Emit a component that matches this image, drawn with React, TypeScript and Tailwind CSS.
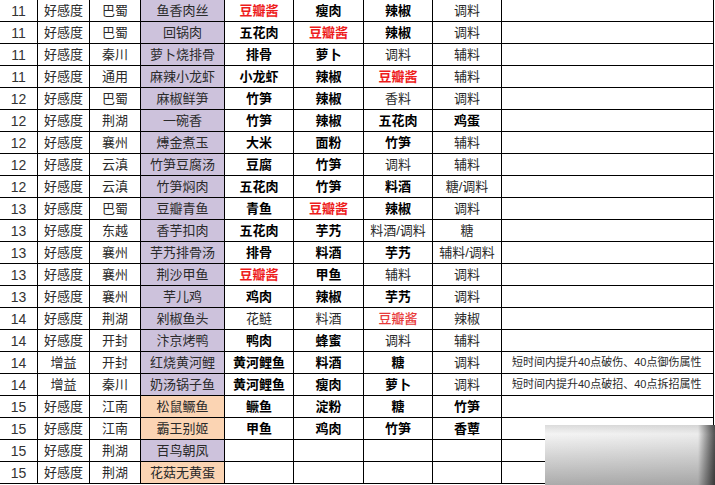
type Cell = { t: string; s?: "b" | "r" | "rn" | "n" };

type Row = {
  lv: string;
  kind: string;
  region: string;
  dish: string;
  bg: "purple" | "orange";
  items: Cell[];
  note?: string;
};

const b = (t: string): Cell => ({ t, s: "b" });
const r = (t: string): Cell => ({ t, s: "r" });
const n = (t: string): Cell => ({ t, s: "n" });

const rows: Row[] = [
  { lv: "11", kind: "好感度", region: "巴蜀", dish: "鱼香肉丝", bg: "purple", items: [r("豆瓣酱"), b("瘦肉"), b("辣椒"), n("调料")] },
  { lv: "11", kind: "好感度", region: "巴蜀", dish: "回锅肉", bg: "purple", items: [b("五花肉"), r("豆瓣酱"), b("辣椒"), n("调料")] },
  { lv: "11", kind: "好感度", region: "秦川", dish: "萝卜烧排骨", bg: "purple", items: [b("排骨"), b("萝卜"), n("调料"), n("辅料")] },
  { lv: "11", kind: "好感度", region: "通用", dish: "麻辣小龙虾", bg: "purple", items: [b("小龙虾"), b("辣椒"), r("豆瓣酱"), n("辅料")] },
  { lv: "12", kind: "好感度", region: "巴蜀", dish: "麻椒鲜笋", bg: "purple", items: [b("竹笋"), b("辣椒"), n("香料"), n("调料")] },
  { lv: "12", kind: "好感度", region: "荆湖", dish: "一碗香", bg: "purple", items: [b("竹笋"), b("辣椒"), b("五花肉"), b("鸡蛋")] },
  { lv: "12", kind: "好感度", region: "襄州", dish: "煿金煮玉", bg: "purple", items: [b("大米"), b("面粉"), b("竹笋"), n("辅料")] },
  { lv: "12", kind: "好感度", region: "云滇", dish: "竹笋豆腐汤", bg: "purple", items: [b("豆腐"), b("竹笋"), n("调料"), n("辅料")] },
  { lv: "12", kind: "好感度", region: "云滇", dish: "竹笋焖肉", bg: "purple", items: [b("五花肉"), b("竹笋"), b("料酒"), n("糖/调料")] },
  { lv: "13", kind: "好感度", region: "巴蜀", dish: "豆瓣青鱼", bg: "purple", items: [b("青鱼"), r("豆瓣酱"), b("辣椒"), n("调料")] },
  { lv: "13", kind: "好感度", region: "东越", dish: "香芋扣肉", bg: "purple", items: [b("五花肉"), b("芋艿"), n("料酒/调料"), n("糖")] },
  { lv: "13", kind: "好感度", region: "襄州", dish: "芋艿排骨汤", bg: "purple", items: [b("排骨"), b("料酒"), b("芋艿"), n("辅料/调料")] },
  { lv: "13", kind: "好感度", region: "襄州", dish: "荆沙甲鱼", bg: "purple", items: [r("豆瓣酱"), b("甲鱼"), n("辅料"), n("调料")] },
  { lv: "13", kind: "好感度", region: "襄州", dish: "芋儿鸡", bg: "purple", items: [b("鸡肉"), b("辣椒"), b("芋艿"), n("调料")] },
  { lv: "14", kind: "好感度", region: "荆湖", dish: "剁椒鱼头", bg: "purple", items: [n("花鲢"), n("料酒"), { t: "豆瓣酱", s: "rn" }, n("辣椒")] },
  { lv: "14", kind: "好感度", region: "开封", dish: "汴京烤鸭", bg: "purple", items: [b("鸭肉"), b("蜂蜜"), n("调料"), n("辅料")] },
  { lv: "14", kind: "增益", region: "开封", dish: "红烧黄河鲤", bg: "purple", items: [b("黄河鲤鱼"), b("料酒"), b("糖"), n("调料")], note: "短时间内提升40点破伤、40点御伤属性" },
  { lv: "14", kind: "增益", region: "秦川", dish: "奶汤锅子鱼", bg: "purple", items: [b("黄河鲤鱼"), b("瘦肉"), b("萝卜"), n("调料")], note: "短时间内提升40点破招、40点拆招属性" },
  { lv: "15", kind: "好感度", region: "江南", dish: "松鼠鳜鱼", bg: "orange", items: [b("鳜鱼"), b("淀粉"), b("糖"), b("竹笋")] },
  { lv: "15", kind: "好感度", region: "江南", dish: "霸王别姬", bg: "orange", items: [b("甲鱼"), b("鸡肉"), b("竹笋"), b("香蕈")] },
  { lv: "15", kind: "好感度", region: "荆湖", dish: "百鸟朝凤", bg: "purple", items: [n(""), n(""), n(""), n("")] },
  { lv: "15", kind: "好感度", region: "荆湖", dish: "花菇无黄蛋", bg: "orange", items: [n(""), n(""), n(""), n("")] },
];

const cell = "h-[22px] flex items-center justify-center border-r border-b border-black whitespace-nowrap overflow-hidden";

function itemClass(s?: Cell["s"]) {
  if (s === "r") return "text-[#ee1c1c] font-bold";
  if (s === "rn") return "text-[#e83a3a] font-medium";
  if (s === "b") return "text-black font-bold";
  return "text-[#2a2a2a]";
}

export default function App() {
  return (
    <div className="relative w-[715px] h-[485px] bg-white overflow-hidden font-['Liberation_Sans','Noto_Sans_CJK_SC',sans-serif] text-[13px] leading-none">
      <div className="grid grid-cols-[38px_52px_51px_84px_69px_70px_69px_69px_212px]">
        {rows.map((row, i) => (
          <div key={i} className="contents">
            <div className={`${cell} text-[14px] text-[#333]`}>{row.lv}</div>
            <div className={`${cell} text-[#2a2a2a]`}>{row.kind}</div>
            <div className={`${cell} text-[#2a2a2a]`}>{row.region}</div>
            <div
              className={`${cell} text-[#2a2a2a] ${row.bg === "orange" ? "bg-[#fbd4b3]" : "bg-[#cdc2dc]"}`}
            >
              {row.dish}
            </div>
            {row.items.map((it, j) => (
              <div key={j} className={`${cell} ${itemClass(it.s)}`}>
                {it.t}
              </div>
            ))}
            <div className={`${cell} justify-start pl-[10px] text-[11px] text-[#2a2a2a]`}>{row.note}</div>
          </div>
        ))}
      </div>

      {/* watermark patch in the bottom-right corner */}
      <div className="absolute left-[545px] top-[425px] w-[170px] h-[60px] bg-linear-to-r from-[#f4f4f4] from-0% via-[#ececec] via-90% to-[#505050] to-100%">
        <div className="absolute inset-0 bg-linear-to-b from-black/10 from-0% via-transparent via-15% to-black/30 to-100%" />
      </div>
    </div>
  );
}
